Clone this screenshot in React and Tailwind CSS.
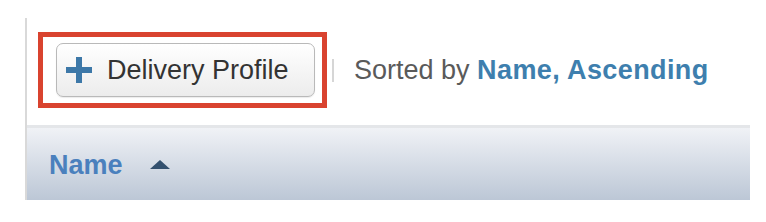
export default function App() {
  return (
    <div className="h-[222px] w-[766px] overflow-hidden bg-white pl-[25px] pt-[18px] font-['Liberation_Sans',Arial,sans-serif]">
      <div className="flex h-[182px] w-[725px] flex-col border-l-2 border-[#d9d9d9]">
        <div className="flex items-center pl-[11px] pt-[14px]">
          <div className="h-[76px] w-[289px] border-[5px] border-[#d9432f] pl-[13px] pt-[6px]">
            <button className="flex h-[54px] w-[259px] items-center gap-[15px] rounded-[7px] border border-[#b9b9b9] bg-gradient-to-b from-white to-[#ececec] pl-[9px] text-[27px] text-[#333] shadow-[0_1px_1px_rgba(0,0,0,0.08)]">
              <svg width="26" height="26" viewBox="0 0 26 26" className="shrink-0">
                <path d="M10 0h6v10h10v6H16v10h-6V16H0v-6h10z" fill="#3d78a8" />
              </svg>
              <span>Delivery Profile</span>
            </button>
          </div>
          <div className="ml-[5px] h-[23px] w-[2px] bg-[#d6d6d6]" />
          <div className="ml-[20px] text-[27px] text-[#5a5a5a]">
            Sorted by <span className="font-bold tracking-[0.4px] text-[#3e7fae]">Name, Ascending</span>
          </div>
        </div>
        <div className="mt-[17px] flex h-[77px] items-center border-t-[3px] border-[#e4e6e9] bg-gradient-to-b from-[#f0f2f6] to-[#bcc7d6] pl-[22px] pt-[2px]">
          <span className="text-[27px] font-bold text-[#4a80bd]">Name</span>
          <svg width="20" height="9" viewBox="0 0 20 9" className="ml-[27px] mb-[2px]">
            <path d="M10 0L20 9H0z" fill="#33506e" />
          </svg>
        </div>
      </div>
    </div>
  )
}
